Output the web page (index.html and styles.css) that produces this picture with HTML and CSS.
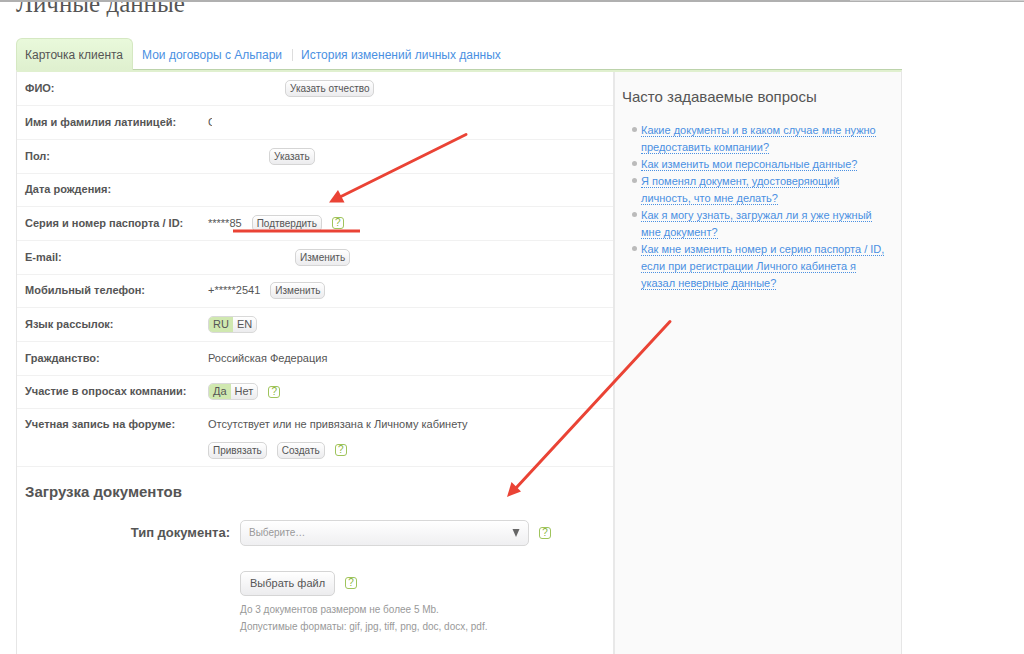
FILE: index.html
```html
<!DOCTYPE html>
<html lang="ru">
<head>
  <meta charset="UTF-8">
  <meta name="viewport" content="width=device-width, initial-scale=1.0">
  <title>Личные данные</title>
  <link rel="stylesheet" href="styles.css">
</head>
<body>
  <div class="topbar"><span class="topbar-tab"></span></div>

  <div class="page">
    <h1>Личные данные</h1>

    <nav class="tabs">
      <a href="#card" class="tab active">Карточка клиента</a>
      <a href="#contracts" class="tab">Мои договоры с Альпари</a>
      <a href="#history" class="tab divided">История изменений личных данных</a>
    </nav>

    <div class="content">
      <main>
        <table class="data">
          <tr>
            <th scope="row">ФИО:</th>
            <td><div class="value"><span class="hidden-name"></span><button type="button" class="btn">Указать отчество</button></div></td>
          </tr>
          <tr>
            <th scope="row">Имя и фамилия латиницей:</th>
            <td><div class="value"><span class="cut">C</span></div></td>
          </tr>
          <tr>
            <th scope="row">Пол:</th>
            <td><div class="value"><span class="hidden-sex"></span><button type="button" class="btn">Указать</button></div></td>
          </tr>
          <tr>
            <th scope="row">Дата рождения:</th>
            <td></td>
          </tr>
          <tr>
            <th scope="row">Серия и номер паспорта / ID:</th>
            <td><div class="value">*****85<button type="button" class="btn">Подтвердить</button><button type="button" class="help">?</button></div></td>
          </tr>
          <tr>
            <th scope="row">E-mail:</th>
            <td><div class="value"><span class="hidden-mail"></span><button type="button" class="btn">Изменить</button></div></td>
          </tr>
          <tr>
            <th scope="row">Мобильный телефон:</th>
            <td><div class="value">+*****2541<button type="button" class="btn">Изменить</button></div></td>
          </tr>
          <tr>
            <th scope="row">Язык рассылок:</th>
            <td>
              <div class="value">
                <div class="switch">
                  <label><input type="radio" name="lang" checked><span>RU</span></label>
                  <label><input type="radio" name="lang"><span>EN</span></label>
                </div>
              </div>
            </td>
          </tr>
          <tr>
            <th scope="row">Гражданство:</th>
            <td>Российская Федерация</td>
          </tr>
          <tr>
            <th scope="row">Участие в опросах компании:</th>
            <td>
              <div class="value">
                <div class="switch">
                  <label><input type="radio" name="polls" checked><span>Да</span></label>
                  <label><input type="radio" name="polls"><span>Нет</span></label>
                </div>
                <button type="button" class="help">?</button>
              </div>
            </td>
          </tr>
          <tr class="forum">
            <th scope="row">Учетная запись на форуме:</th>
            <td>
              Отсутствует или не привязана к Личному кабинету
              <div class="value forum-actions">
                <button type="button" class="btn">Привязать</button>
                <button type="button" class="btn">Создать</button>
                <button type="button" class="help">?</button>
              </div>
            </td>
          </tr>
        </table>

        <form class="upload">
          <h2>Загрузка документов</h2>
          <div class="field">
            <label for="doc-type">Тип документа:</label>
            <div class="select">
              <select id="doc-type">
                <option>Выберите…</option>
              </select>
              <svg class="caret" width="8" height="8" viewBox="0 0 8 8"><path d="M0.500 0h7L4 8z" fill="#666"/></svg>
            </div>
            <button type="button" class="help">?</button>
          </div>
          <div class="file">
            <div class="file-row">
              <button type="button" class="btn-large">Выбрать файл</button>
              <button type="button" class="help">?</button>
            </div>
            <p>До 3 документов размером не более 5 Mb.<br>Допустимые форматы: gif, jpg, tiff, png, doc, docx, pdf.</p>
          </div>
        </form>
      </main>

      <aside>
        <h3>Часто задаваемые вопросы</h3>
        <ul>
          <li><a href="#q1">Какие документы и в каком случае мне нужно предоставить компании?</a></li>
          <li><a href="#q2">Как изменить мои персональные данные?</a></li>
          <li><a href="#q3">Я поменял документ, удостоверяющий личность, что мне делать?</a></li>
          <li><a href="#q4">Как я могу узнать, загружал ли я уже нужный мне документ?</a></li>
          <li><a href="#q5">Как мне изменить номер и серию паспорта / ID, если при регистрации Личного кабинета я указал неверные данные?</a></li>
        </ul>
      </aside>
    </div>
  </div>

  <!-- red pointers over the page -->
  <svg class="marks" width="700" height="510" viewBox="0 0 700 510">
    <g stroke="#ea4335" stroke-width="3" stroke-linecap="round" fill="none">
      <path d="M466 134.500L340 197"/>
      <path d="M670 321.500L516 488"/>
      <path d="M233 231H360" stroke-linecap="butt"/>
    </g>
    <path d="M329 202.500L338 190L344.500 202.500z" fill="#ea4335"/>
    <path d="M507 497L511.500 482L521 491.500z" fill="#ea4335"/>
  </svg>
</body>
</html>
```
FILE: styles.css
```css
* {
  box-sizing: border-box;
}

body {
  margin: 0;
  position: relative;
  min-height: 100vh;
  display: flex;
  flex-direction: column;
  overflow: hidden;
  background: #fff;
  color: #555;
  font-family: "Liberation Sans", Arial, sans-serif;
  font-size: 11px;
  line-height: 17px;
}

.topbar {
  position: relative;
  z-index: 1;
  height: 2px;
  background: #b0b0b0;
}

.topbar-tab {
  display: block;
  height: 1px;
  margin-left: 83%;
  background: #d0d0d0;
}

.page {
  flex: 1;
  display: flex;
  flex-direction: column;
  margin: 0 122px 0 16px;
}

h1 {
  margin: -12px 0 20px;
  font-family: Georgia, "Liberation Serif", serif;
  font-size: 25px;
  font-weight: normal;
  line-height: 28px;
}

a {
  color: #4a90e2;
  text-decoration: none;
}

/* tabs */
.tabs {
  display: flex;
  align-items: flex-end;
  height: 32px;
  border-bottom: 1px solid #bcd3ab;
  font-size: 12px;
}

.tab {
  margin-bottom: 5px;
  padding: 0 10px 0 9px;
}

.tab.active {
  height: 32px;
  margin-bottom: -1px;
  padding: 8px 9px 0 8px;
  border: 1px solid #d5e8c2;
  border-bottom: none;
  border-radius: 6px 6px 0 0;
  background: linear-gradient(#e9f9db, #dff0cf);
  color: #555;
}

.tab.divided {
  position: relative;
}

.tab.divided::before {
  content: "";
  position: absolute;
  left: 0;
  top: 2px;
  height: 12px;
  border-left: 1px solid #ddd;
}

.content {
  flex: 1;
  display: flex;
  border: 1px solid #e6e6e6;
  border-top: 2px solid #e0f0cf;
  border-bottom: none;
}

main {
  flex: 1;
}

/* client data */
.data {
  width: 100%;
  border-collapse: collapse;
}

.data tr {
  height: 34px;
  border-bottom: 1px solid #f1f1f1;
}

.data tr:nth-child(3n+1) {
  height: 33px;
}

.data th,
.data td {
  padding: 0;
  text-align: left;
}

.data th {
  width: 191px;
  padding-left: 8px;
}

.value {
  display: flex;
  align-items: center;
  gap: 10px;
}

.hidden-name {
  width: 67px;
}

.hidden-sex {
  width: 51px;
}

.hidden-mail {
  width: 77px;
}

.cut {
  width: 4px;
  overflow: hidden;
}

.btn {
  height: 17px;
  padding: 0 4px;
  border: 1px solid #d5d5d5;
  border-radius: 5px;
  background: linear-gradient(#fff, #ececee);
  color: #555;
  font-family: inherit;
  font-size: 10px;
  line-height: 15px;
}

.help {
  width: 12px;
  height: 12px;
  padding: 0;
  border: 1px solid #9fc45c;
  border-radius: 3px;
  background: #fff;
  color: #8ab63c;
  font-family: inherit;
  font-size: 10px;
  line-height: 10px;
}

.switch {
  display: flex;
  height: 17px;
  border: 1px solid #d9d9d9;
  border-radius: 5px;
  overflow: hidden;
  background: linear-gradient(#fff, #ececee);
  line-height: 15px;
}

.switch label {
  position: relative;
}

.switch input {
  position: absolute;
  margin: 0;
  opacity: 0;
}

.switch span {
  display: block;
  padding: 0 4px;
}

.switch input:checked + span {
  background: #d0e8b0;
}

.data .forum {
  height: 58px;
}

.data .forum th,
.data .forum td {
  padding-top: 7px;
  padding-bottom: 6px;
  vertical-align: top;
}

.forum-actions {
  margin-top: 9px;
}

/* upload form */
h2 {
  margin: 0;
  font-size: 15px;
  line-height: 18px;
}

.upload {
  padding: 16px 8px;
}

.field,
.file-row {
  display: flex;
  align-items: center;
  gap: 10px;
}

.field {
  margin-top: 19px;
}

.field label {
  width: 205px;
  text-align: right;
  font-size: 13px;
  font-weight: bold;
}

.select {
  position: relative;
}

.select select {
  appearance: none;
  display: block;
  width: 289px;
  height: 26px;
  padding: 0 8px;
  border: 1px solid #d8d8d8;
  border-radius: 5px;
  background: linear-gradient(#fff, #efeff1);
  color: #999;
  font-family: inherit;
  font-size: 10px;
}

.caret {
  position: absolute;
  right: 9px;
  top: 9px;
  pointer-events: none;
}

.file {
  margin: 25px 0 0 215px;
}

.btn-large {
  height: 25px;
  padding: 0 9px;
  border: 1px solid #d5d5d5;
  border-radius: 5px;
  background: linear-gradient(#fff, #ececee);
  color: #555;
  font-family: inherit;
  font-size: 11px;
}

.file p {
  margin: 5px 0 0;
  color: #999;
  font-size: 10px;
}

/* questions */
aside {
  width: 288px;
  padding: 15px 13px 15px 7px;
  border-left: 2px solid #e8e8e8;
  background: #fafafa;
}

aside h3 {
  margin: 0 0 15px;
  font-size: 15px;
  font-weight: normal;
  line-height: 20px;
}

aside ul {
  margin: 0;
  padding-left: 19px;
  list-style: none;
}

aside li {
  position: relative;
}

aside li::before {
  content: "";
  position: absolute;
  left: -9px;
  top: 5px;
  width: 5px;
  height: 5px;
  border-radius: 50%;
  background: #bbb;
}

aside a {
  border-bottom: 1px dotted #4a90e2;
}

.marks {
  position: absolute;
  left: 0;
  top: 0;
  pointer-events: none;
}
```
